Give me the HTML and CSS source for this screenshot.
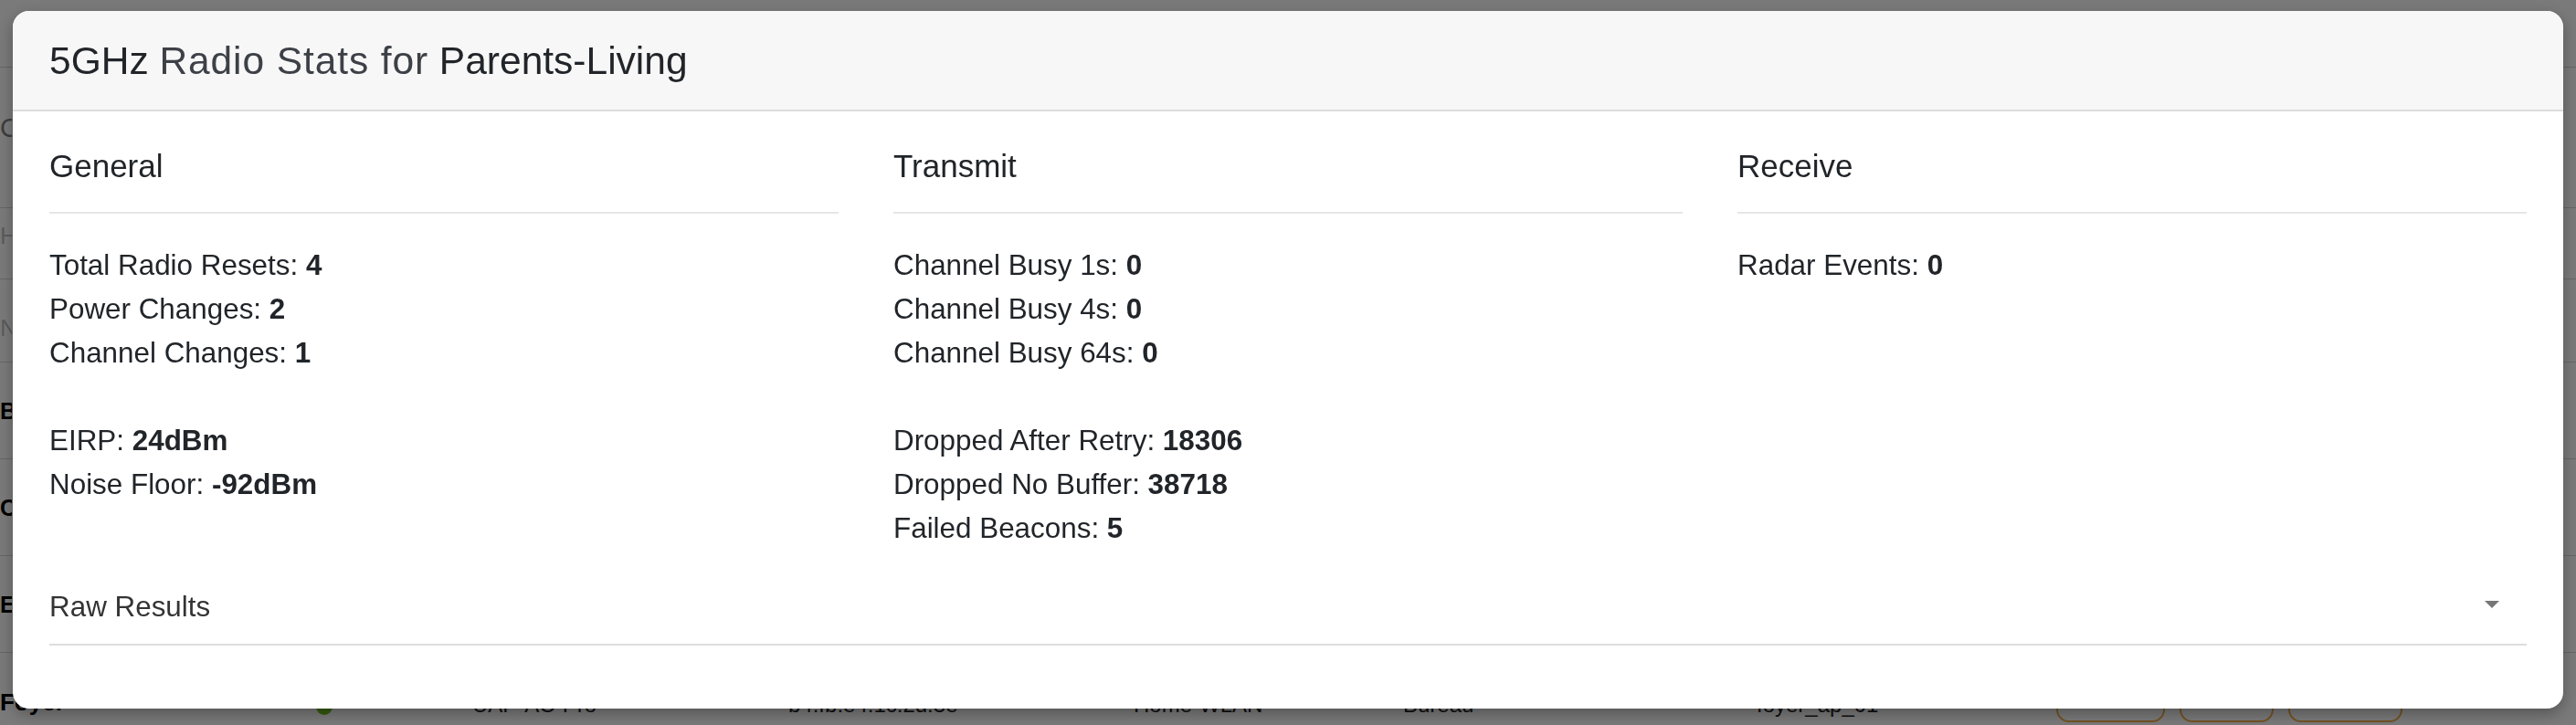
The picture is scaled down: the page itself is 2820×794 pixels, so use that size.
FILE: index.html
```html
<!DOCTYPE html>
<html>
<head>
<meta charset="utf-8">
<link rel="stylesheet" href="styles.css">
</head>
<body>
<div class="page">
  <div class="pg-nav"></div>
  <div class="pg-title"><span class="clip">Clients</span></div>
  <div class="pg-sub"><span class="clip">Home</span></div>
  <div class="pg-thead"><span class="clip">Name</span></div>
  <div class="pg-row"><b class="clip">Bedroom</b></div>
  <div class="pg-row"><b class="clip">Conservatory</b></div>
  <div class="pg-row"><b class="clip">Entrance</b></div>
  <div class="pg-last">
    <b class="pg-name">Foyer</b>
    <span class="pg-dot-cell"><span class="pg-dot"></span></span>
    <span class="pg-cell">UAP-AC-Pro</span>
    <span class="pg-cell">b4:fb:e4:1c:2d:3e</span>
    <span class="pg-cell">Home-WLAN</span>
    <span class="pg-cell">Bureau</span>
    <span class="pg-cell">foyer_ap_01</span>
    <span class="pg-btns">
      <span class="pg-btn w1"></span>
      <span class="pg-btn w2"></span>
      <span class="pg-btn w3"></span>
    </span>
  </div>
</div>
<div class="backdrop"></div>
<div class="modal">
  <div class="modal-header">
    <h5 class="modal-title">5GHz <span class="light">Radio Stats for</span> Parents-Living</h5>
  </div>
  <div class="modal-body">
    <div class="cols">
      <div class="col">
        <h6 class="col-title">General</h6>
        <div class="stats">
          <div>Total Radio Resets: <b>4</b></div>
          <div>Power Changes: <b>2</b></div>
          <div>Channel Changes: <b>1</b></div>
          <div class="gap"></div>
          <div>EIRP: <b>24dBm</b></div>
          <div>Noise Floor: <b>-92dBm</b></div>
        </div>
      </div>
      <div class="col">
        <h6 class="col-title">Transmit</h6>
        <div class="stats">
          <div>Channel Busy 1s: <b>0</b></div>
          <div>Channel Busy 4s: <b>0</b></div>
          <div>Channel Busy 64s: <b>0</b></div>
          <div class="gap"></div>
          <div>Dropped After Retry: <b>18306</b></div>
          <div>Dropped No Buffer: <b>38718</b></div>
          <div>Failed Beacons: <b>5</b></div>
        </div>
      </div>
      <div class="col">
        <h6 class="col-title">Receive</h6>
        <div class="stats">
          <div>Radar Events: <b>0</b></div>
        </div>
      </div>
    </div>
    <div class="raw">
      <span>Raw Results</span>
      <span class="caret"></span>
    </div>
  </div>
</div>
</body>
</html>
```
FILE: styles.css
```css
html, body {
  margin: 0;
  padding: 0;
}
body {
  width: 2820px;
  height: 794px;
  overflow: hidden;
  position: relative;
  background: #ffffff;
  font-family: "Liberation Sans", Arial, Helvetica, sans-serif;
  color: #212529;
}

/* underlying page (dimmed by the backdrop) */
.page {
  display: flex;
  flex-direction: column;
}
.clip {
  display: block;
  width: 13px;
  overflow: hidden;
  white-space: nowrap;
}
.pg-nav {
  height: 74px;
  box-sizing: border-box;
  border-bottom: 1px solid #d6d6d6;
}
.pg-title {
  height: 154px;
  box-sizing: border-box;
  padding-top: 48px;
  font-size: 29px;
  line-height: 36px;
  color: #808080;
  border-bottom: 1px solid #d6d6d6;
}
.pg-sub {
  height: 78px;
  box-sizing: border-box;
  padding-top: 10px;
  font-size: 26px;
  line-height: 40px;
  color: #c0c0c0;
  border-bottom: 1px solid #d6d6d6;
}
.pg-thead {
  height: 91px;
  box-sizing: border-box;
  padding-top: 33px;
  font-size: 26px;
  line-height: 40px;
  color: #c0c0c0;
  border-bottom: 1px solid #d6d6d6;
}
.pg-row {
  height: 106px;
  box-sizing: border-box;
  padding-top: 38px;
  border-bottom: 1px solid #d6d6d6;
  font-size: 25px;
  line-height: 30px;
  color: #000;
}
.pg-last {
  display: grid;
  grid-template-columns: 346px 171px 346px 378px 295px 387px 328px auto;
  align-items: start;
  padding-top: 28px;
  height: 110px;
  box-sizing: border-box;
  font-size: 26px;
  line-height: 30px;
}
.pg-name {
  margin-top: 11px;
  color: #000;
}
.pg-dot-cell {
  padding-top: 22px;
}
.pg-dot {
  display: block;
  width: 18px;
  height: 18px;
  border-radius: 50%;
  background: #6fbf1f;
}
.pg-cell {
  margin-top: 14px;
  color: #222;
  font-size: 24px;
}
.pg-btns {
  display: flex;
  gap: 16px;
}
.pg-btn {
  display: block;
  height: 48px;
  box-sizing: border-box;
  border: 2px solid #f0ad4e;
  border-radius: 14px;
}
.w1 { width: 119px; }
.w2 { width: 103px; }
.w3 { width: 125px; }

.backdrop {
  position: fixed;
  inset: 0;
  background: rgba(0, 0, 0, 0.52);
}

/* modal */
.modal {
  position: absolute;
  top: 12px;
  left: 14px;
  width: 2792px;
  height: 764px;
  background: #ffffff;
  border-radius: 18px;
  box-shadow: 0 6px 16px rgba(0, 0, 0, 0.3);
  overflow: hidden;
  display: flex;
  flex-direction: column;
}
.modal-header {
  box-sizing: border-box;
  height: 110px;
  background: #f7f7f7;
  border-bottom: 2px solid #dcdcdc;
  display: flex;
  align-items: center;
  padding: 2px 40px 0;
}
.modal-title {
  margin: 0;
  font-size: 42.5px;
  font-weight: 400;
  line-height: 50px;
  color: #212529;
}
.light {
  font-weight: 300;
  color: #3d4147;
  letter-spacing: 0.9px;
}
.modal-body {
  padding: 39px 40px 0;
}
.cols {
  display: flex;
  gap: 60px;
}
.col {
  flex: 1 1 0;
  min-width: 0;
}
.col-title {
  margin: 0;
  font-size: 35px;
  font-weight: 400;
  line-height: 42px;
  padding-bottom: 29px;
  border-bottom: 2px solid #e6e6e6;
  color: #212529;
}
.stats {
  margin-top: 33px;
  font-size: 31.4px;
  line-height: 48px;
  color: #212529;
}
.stats b {
  font-weight: 700;
}
.gap {
  height: 48px;
}
.raw {
  margin-top: 38px;
  display: flex;
  justify-content: space-between;
  align-items: center;
  font-size: 31.4px;
  line-height: 48px;
  color: #343434;
  padding-bottom: 16px;
  padding-right: 30px;
  border-bottom: 2px solid #dedede;
}
.caret {
  width: 0;
  height: 0;
  border-left: 8px solid transparent;
  border-right: 8px solid transparent;
  border-top: 8px solid #777777;
  margin-bottom: 6px;
}
```
